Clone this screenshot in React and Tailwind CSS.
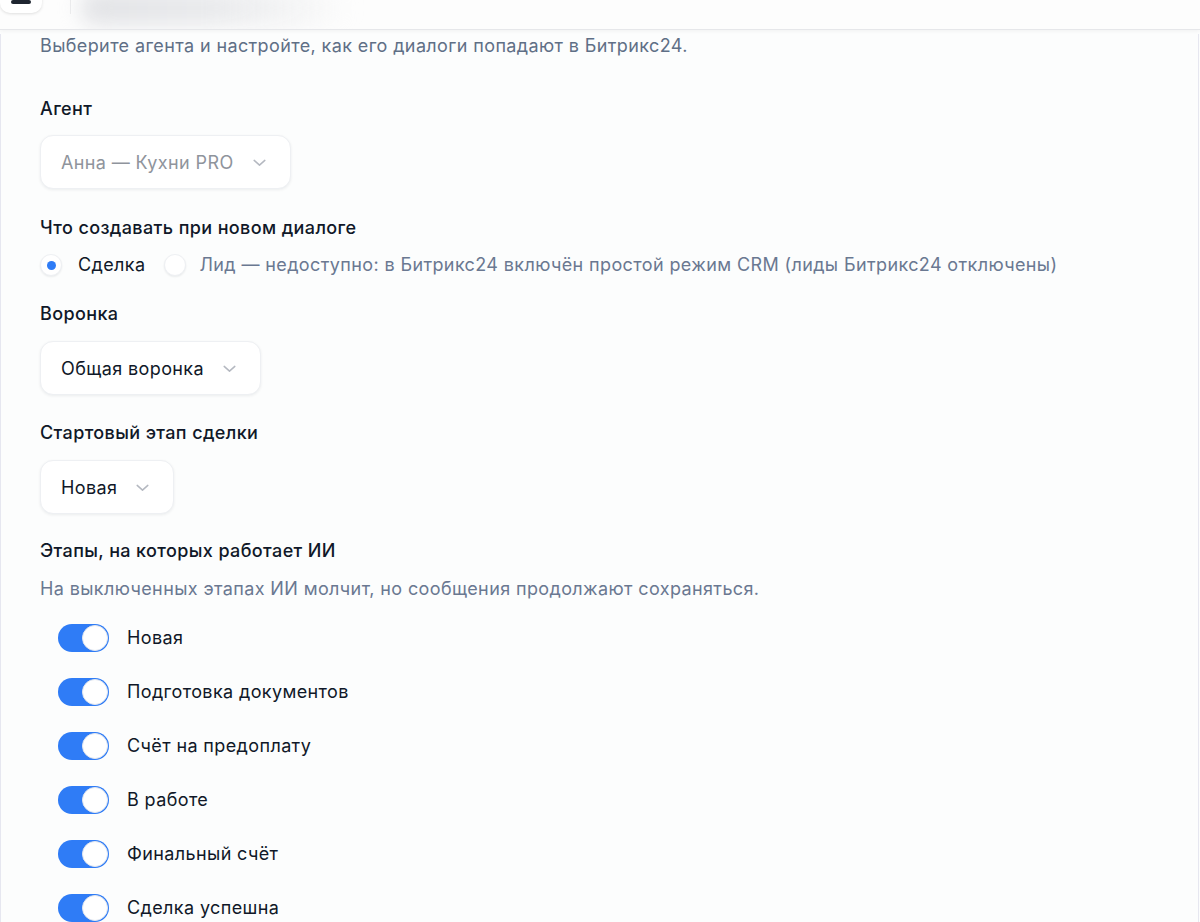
import { useState } from 'react';

const STAGES = [
  'Новая',
  'Подготовка документов',
  'Счёт на предоплату',
  'В работе',
  'Финальный счёт',
  'Сделка успешна',
];

function Chevron({ className = '' }) {
  return (
    <svg viewBox="0 0 16 16" className={className} fill="none" stroke="currentColor" strokeWidth="1.4" strokeLinecap="round" strokeLinejoin="round">
      <path d="M3 6l5 4.5L13 6" />
    </svg>
  );
}

function Select({ value, disabled }) {
  return (
    <div className="h-[54px] inline-flex items-center pl-5 pr-[22px] rounded-[13px] bg-white border border-[#eef0f3] shadow-[0_1px_3px_rgba(15,23,42,0.07)]">
      <span className={disabled ? 'text-[#8f949c]' : 'text-[#101828]'}>{value}</span>
      <Chevron className="w-[17px] h-[17px] ml-[17px] text-[#b4b8c0]" />
    </div>
  );
}

function Radio({ checked }) {
  return (
    <span className="w-[22px] h-[22px] rounded-full bg-white border border-[#eef0f3] shadow-[0_1px_2px_rgba(15,23,42,0.08)] flex items-center justify-center">
      {checked && <span className="w-[9px] h-[9px] rounded-full bg-[#2f7cf6]" />}
    </span>
  );
}

function Toggle({ on, onClick }) {
  return (
    <button
      onClick={onClick}
      className={`w-[51px] h-[28px] rounded-full p-[1px] flex items-center ${on ? 'bg-[#2f7cf6] justify-end' : 'bg-[#d8dce3] justify-start'}`}
    >
      <span className="w-[26px] h-[26px] rounded-full bg-white border border-[#e3e7ee]" />
    </button>
  );
}

export default function App() {
  const [stages, setStages] = useState(STAGES.map(() => true));

  return (
    <div className="min-h-screen bg-[#fcfdfd] text-[18px] tracking-[0.38px] text-[#101828]" style={{ fontFamily: 'Inter, "Noto Sans", sans-serif' }}>
      {/* top bar, blurred */}
      <div className="h-[30px] relative bg-[#fdfdfd] border-b border-[#e6e7ea] shadow-[0_1px_4px_rgba(0,0,0,0.05)] overflow-hidden">
        <div className="absolute left-0 top-[-20px] w-[42px] h-[33px] rounded-[10px] bg-white shadow-[0_1px_3px_rgba(0,0,0,0.12)] flex items-end justify-center pb-[9px]">
          <span className="w-[20px] h-[4px] rounded-sm bg-[#1e2530]" />
        </div>
        <div className="absolute left-[70px] top-0 w-px h-[14px] bg-[#ececee]" />
        <div className="absolute left-[80px] top-[-10px] w-[270px] h-[36px] rounded-full bg-gradient-to-r from-[#e2e3e6] via-[#e9eaec] to-transparent blur-[10px]" />
      </div>

      <div className="w-[1199px] border-l border-r border-[#e6e7f0] pl-[39px] pb-10">
        <p className="mt-[4px] leading-6 text-[#5f6f86]">
          Выберите агента и настройте, как его диалоги попадают в Битрикс24.
        </p>

        <div className="mt-[39px] leading-6 font-medium">Агент</div>
        <div className="mt-[14px]">
          <Select value="Анна — Кухни PRO" disabled />
        </div>

        <div className="mt-[27px] leading-6 font-medium">Что создавать при новом диалоге</div>
        <div className="mt-[13px] flex items-center leading-6">
          <Radio checked />
          <span className="ml-[16px]">Сделка</span>
          <span className="ml-[19px]"><Radio /></span>
          <span className="ml-[13px] text-[#6a7891]">
            Лид — недоступно: в Битрикс24 включён простой режим CRM (лиды Битрикс24 отключены)
          </span>
        </div>

        <div className="mt-[25px] leading-6 font-medium">Воронка</div>
        <div className="mt-[15px]">
          <Select value="Общая воронка" />
        </div>

        <div className="mt-[26px] leading-6 font-medium">Стартовый этап сделки</div>
        <div className="mt-[15px]">
          <Select value="Новая" />
        </div>

        <div className="mt-[25px] leading-6 font-medium">Этапы, на которых работает ИИ</div>
        <p className="mt-[14px] leading-6 text-[#6a7891]">
          На выключенных этапах ИИ молчит, но сообщения продолжают сохраняться.
        </p>

        <div className="mt-[23px] ml-[18px] flex flex-col gap-[26px]">
          {STAGES.map((s, i) => (
            <div key={s} className="flex items-center">
              <Toggle on={stages[i]} onClick={() => setStages(prev => prev.map((v, j) => (j === i ? !v : v)))} />
              <span className="ml-[18px] leading-6">{s}</span>
            </div>
          ))}
        </div>
      </div>
    </div>
  );
}
